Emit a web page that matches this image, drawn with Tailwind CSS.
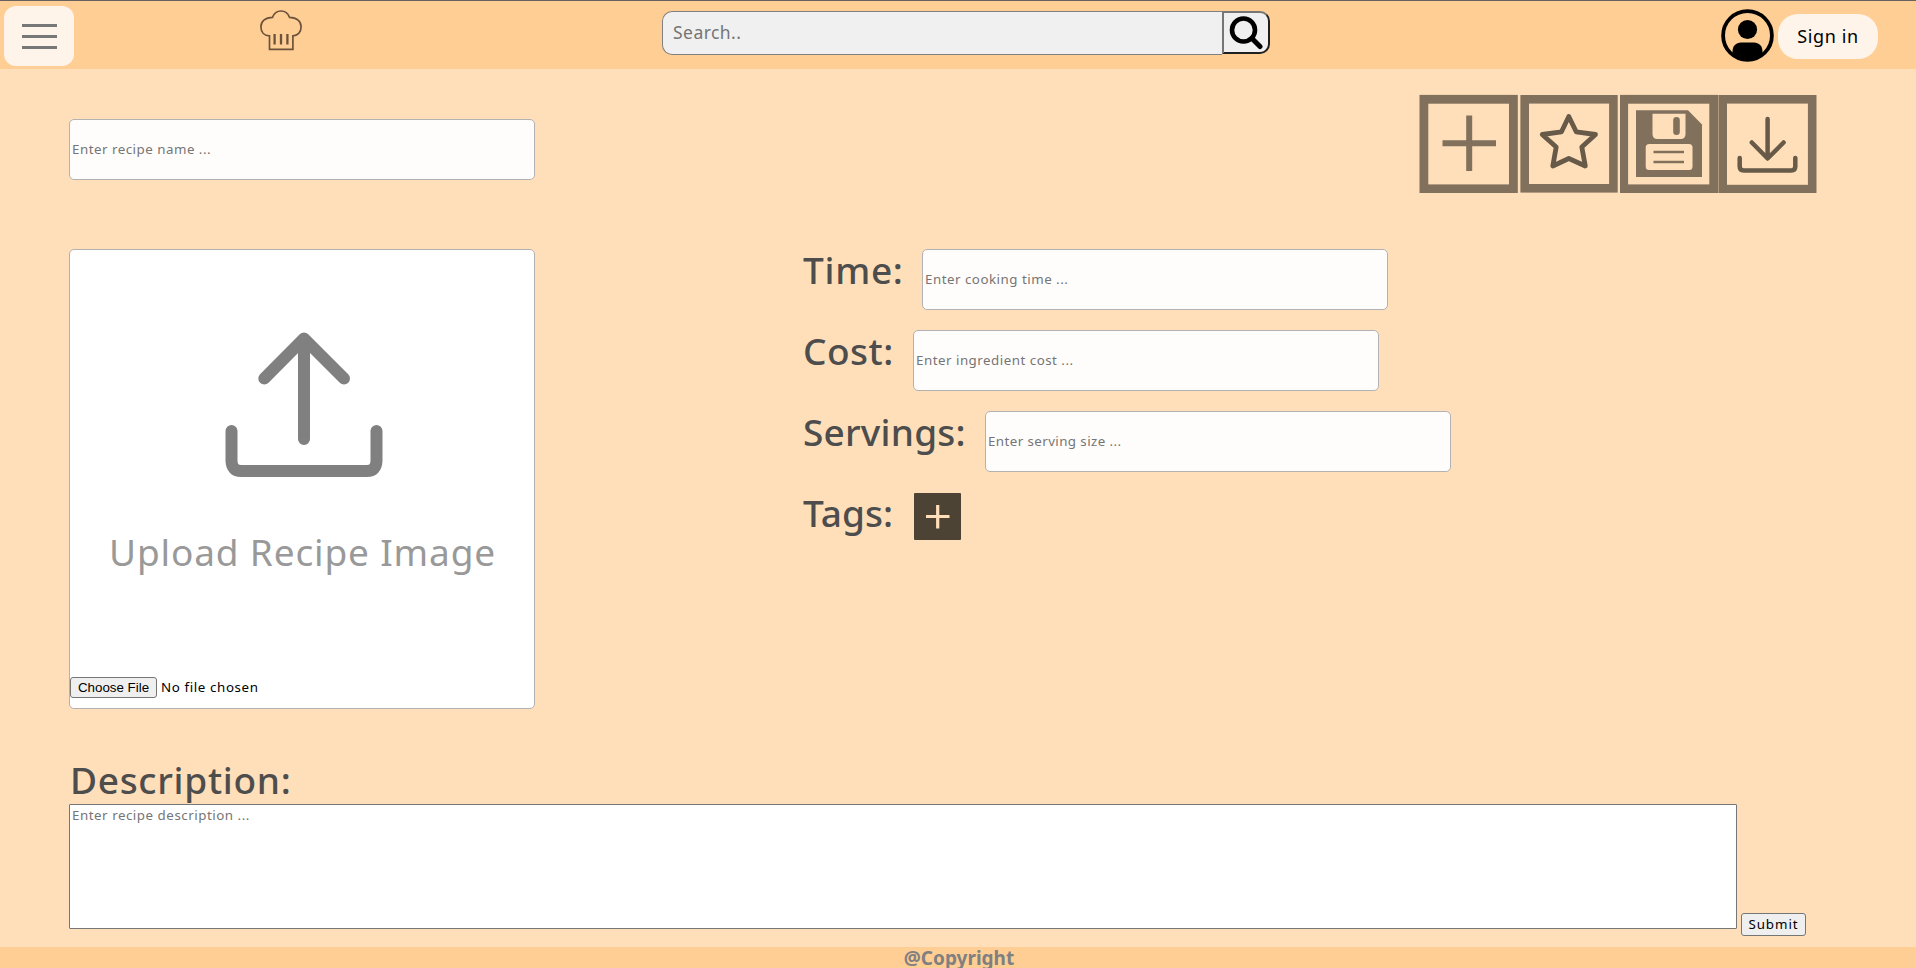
<!DOCTYPE html>
<html lang="en">
<head>
<meta charset="utf-8">
<title>New recipe</title>
<script src="https://cdn.jsdelivr.net/npm/@tailwindcss/browser@4"></script>
</head>
<body class="h-[968px] overflow-hidden bg-[#ffdfba] font-['Noto_Sans',sans-serif] text-black">
<div class="flex h-[968px] flex-col overflow-hidden">
  <header class="flex h-[69px] shrink-0 items-start border-t border-[#67615f] bg-[#ffce94]">
    <button class="mt-[5px] ml-1 flex h-[60px] w-[70px] flex-col items-center justify-center gap-2 rounded-xl bg-[#fff4e9]">
      <span class="h-[3px] w-[35px] bg-[#777]"></span>
      <span class="h-[3px] w-[35px] bg-[#777]"></span>
      <span class="h-[3px] w-[35px] bg-[#777]"></span>
    </button>
    <svg class="mt-2 ml-[185px] h-[42px] w-[44px]" viewBox="0 0 44 42" fill="none" stroke="#6d533b" stroke-width="1.7">
      <path d="M10.500 40.300V26.800C5.500 26.800 1.900 23.500 1.900 17.800C1.900 12.500 6 8.500 13.500 8.300C15 4.200 18.500 2 22 2C25.500 2 29 4.200 30.500 8.300C38 8.500 42.100 12.500 42.100 17.800C42.100 23.500 38.500 26.800 33.900 26.800V40.300Z"/>
      <path d="M15.600 25V35.500M22 25V35.500M28.400 25V35.500" stroke-width="2.300"/>
    </svg>
    <form class="mt-2.5 ml-[359px] flex items-start">
      <input class="h-11 w-[560px] rounded-l-[10px] border border-r-0 border-[#808080] bg-[#f0f0f0] pb-0.5 pl-2.5 text-[17.5px] tracking-[0.45px] placeholder:text-[#757575]" placeholder="Search..">
      <button type="button" class="flex h-[43px] w-[48px] items-center justify-center rounded-r-[10px] border-2 border-t-[#767676] border-r-[#202020] border-b-[#202020] border-l-[#767676] bg-[#f0f0f0]">
        <svg class="mr-px h-[34px] w-[34px]" viewBox="0 0 34 34" fill="none" stroke="#000"><circle cx="14.500" cy="14" r="11.500" stroke-width="4.600"/><path d="M23 22.500L31 30.500" stroke-width="5" stroke-linecap="round"/></svg>
      </button>
    </form>
    <svg class="mt-2 ml-[451px] h-[53px] w-[53px]" viewBox="0 0 53 53"><circle cx="26.500" cy="26.500" r="24.400" fill="none" stroke="#000" stroke-width="3.800"/><circle cx="26.500" cy="20.500" r="9.600"/><path d="M11.500 45V42.500C11.500 37 15 33.500 20 33.500H33C38 33.500 41.500 37 41.500 42.500V45C33 53 20 53 11.500 45Z"/></svg>
    <button class="mt-[13px] ml-1 h-[45px] w-[100px] rounded-[20px] bg-[#fff4e9] text-[18px] tracking-[0.6px]">Sign in</button>
  </header>

  <main class="flex h-[878px] shrink-0 flex-col pl-[69px]">
    <section class="flex h-[180px] shrink-0 items-start">
      <input class="mt-[50px] h-[61px] w-[466px] rounded-[5px] border border-[#b2b2b2] bg-[#fffdfb] pb-0.5 pl-0.5 text-[13.333px] tracking-[0.5px] placeholder:text-[#757575]" placeholder="Enter recipe name ...">
      <div class="mt-[25px] ml-[884px] flex h-[100px] items-start gap-0.5">
        <svg class="h-[99px] w-[99px]" viewBox="0 0 99 99" fill="none" stroke="#80705c"><rect x="4.900" y="5.300" width="89.500" height="89.500" stroke-width="8.800"/><path d="M23.500 49.200H77M50.200 21.500V77" stroke-width="6"/></svg>
        <svg class="h-[99px] w-[98px]" viewBox="0 0 98 99" fill="none" stroke="#80705c"><rect x="4.700" y="5.300" width="88.700" height="89" stroke-width="8.600"/><path d="M48.800 22.500L56.200 37.800L75.500 40.500L61.800 53L65.300 72L48.800 64.500L32.800 72L36.200 53L22.200 40.500L41.500 37.800Z" stroke="#675a48" stroke-width="4.800" stroke-linejoin="round"/></svg>
        <svg class="h-[99px] w-[98px]" viewBox="0 0 98 99" fill="none"><rect x="3.700" y="5.300" width="90" height="89.500" stroke="#80705c" stroke-width="8.800"/><path d="M16 16.300H68L82 30.500V83H16Z" fill="#80705c"/><path d="M32.500 19.700H65.500V40Q65.500 45 60.500 45H37.500Q32.500 45 32.500 40Z" fill="#ffdfba"/><rect x="53.200" y="23" width="6.600" height="18" rx="3.300" fill="#80705c"/><rect x="25.700" y="50" width="46.800" height="26" rx="3.500" fill="#ffdfba"/><path d="M33.500 58H64M33.500 68H64" stroke="#80705c" stroke-width="2.300"/></svg>
        <svg class="-ml-0.5 h-[99px] w-[99px]" viewBox="0 0 99 99" fill="none"><rect x="4.700" y="5.300" width="89.500" height="89.800" stroke="#80705c" stroke-width="8.600"/><path d="M49.600 25V64M33.800 48.500L49.600 64.500L65.600 48.500M21.700 64V72.500Q21.700 76.500 25.700 76.500H73.300Q77.300 76.500 77.300 72.500V64" stroke="#675a48" stroke-width="4.500" stroke-linecap="round" stroke-linejoin="round"/></svg>
      </div>
    </section>

    <section class="flex h-[460px] shrink-0 items-start">
      <div class="flex h-[460px] w-[466px] flex-col rounded-[5px] border border-[#b2b2b2] bg-white">
        <svg class="mt-[80px] ml-[153px] h-[150px] w-[162px]" viewBox="0 0 162 150" fill="none" stroke="#808080" stroke-width="12" stroke-linecap="round" stroke-linejoin="round"><path d="M81 109V9.500M41.300 48.500L81 8.500L121 48.500M8.500 101V131Q9 141 18 141H144Q153 141 153.500 131V101"/></svg>
        <p class="mt-[44px] pl-[39px] text-[37px] leading-[56px] tracking-[0.85px] whitespace-nowrap text-[#999]">Upload Recipe Image</p>
        <div class="mt-[97px] flex items-center">
          <button class="h-[21px] w-[87px] rounded-[3px] border border-[#767676] bg-[#efefef] font-['Liberation_Sans',sans-serif] text-[13.333px] leading-none whitespace-nowrap">Choose File</button>
          <span class="ml-1 text-[13.333px] leading-[21px] tracking-[0.62px]">No file chosen</span>
        </div>
      </div>
      <div class="ml-[268px] flex flex-col gap-5 text-[37px] font-medium text-[#4d4d4d]">
        <div class="flex h-[61px] items-start"><label class="w-[119px] leading-[42px] tracking-[0.7px]">Time:</label><input class="h-[61px] w-[466px] rounded-[5px] border border-[#b2b2b2] bg-[#fffdfb] pb-0.5 pl-0.5 text-[13.333px] font-normal tracking-[0.5px] placeholder:text-[#757575]" placeholder="Enter cooking time ..."></div>
        <div class="flex h-[61px] items-start"><label class="w-[110px] leading-[42px] tracking-[0.5px]">Cost:</label><input class="h-[61px] w-[466px] rounded-[5px] border border-[#b2b2b2] bg-[#fffdfb] pb-0.5 pl-0.5 text-[13.333px] font-normal tracking-[0.5px] placeholder:text-[#757575]" placeholder="Enter ingredient cost ..."></div>
        <div class="flex h-[61px] items-start"><label class="w-[182px] leading-[42px] tracking-[0.2px]">Servings:</label><input class="h-[61px] w-[466px] rounded-[5px] border border-[#b2b2b2] bg-[#fffdfb] pb-0.5 pl-0.5 text-[13.333px] font-normal tracking-[0.42px] placeholder:text-[#757575]" placeholder="Enter serving size ..."></div>
        <div class="flex h-[61px] items-start"><label class="w-[111px] leading-[42px]">Tags:</label><svg class="mt-px h-[47px] w-[47px]" viewBox="0 0 47 47"><rect width="47" height="47" rx="1" fill="#4d4335"/><path d="M12 23.500H35.500M23.700 12V35.500" stroke="#ffdfba" stroke-width="3.200"/></svg></div>
      </div>
    </section>

    <section class="pt-[50px]">
      <h2 class="h-[45px] pl-px text-[37px] leading-[42px] font-medium tracking-[0.7px] text-[#4d4d4d]">Description:</h2>
      <div class="flex items-end gap-1">
        <textarea class="h-[125px] w-[1668px] resize-none rounded-[1px] border border-[#767676] bg-white px-0.5 py-0.5 text-[13.333px] leading-[17px] tracking-[0.53px] placeholder:text-[#757575]" placeholder="Enter recipe description ..."></textarea>
        <button class="-mb-[7px] h-[23px] w-[65px] rounded-[3px] border border-[#767676] bg-[#efefef] text-[13.333px] leading-none tracking-[0.95px]">Submit</button>
      </div>
    </section>
  </main>

  <footer class="h-[21px] shrink-0 bg-[#ffce94] pl-0.5 text-center text-[19px] leading-[23px] font-bold text-[#808080]">@Copyright</footer>
</div>
</body>
</html>
